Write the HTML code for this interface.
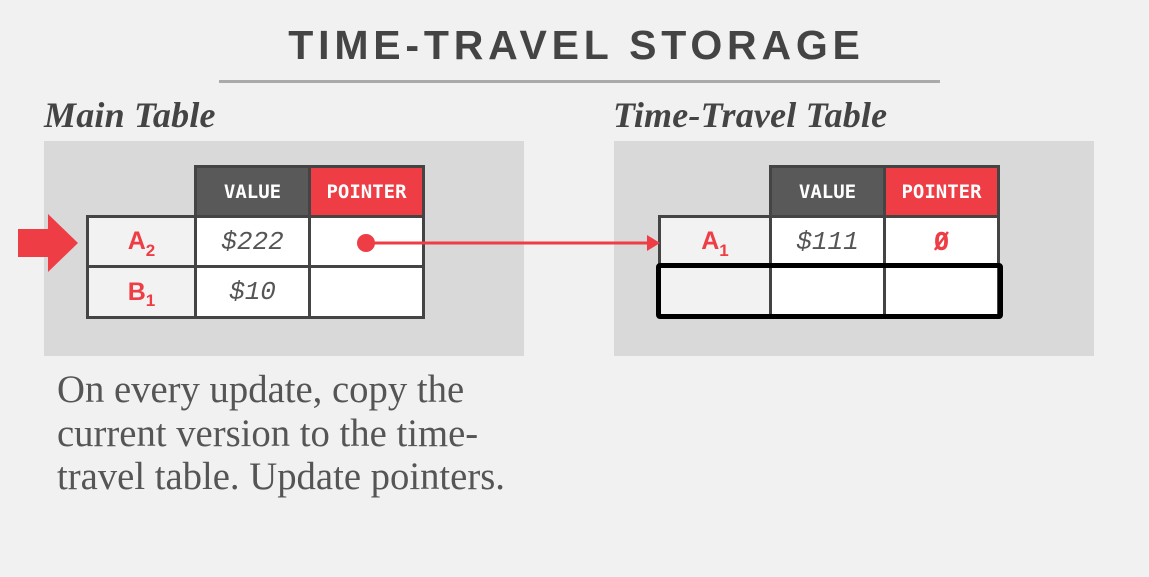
<!DOCTYPE html>
<html><head><meta charset="utf-8"><style>
*{margin:0;padding:0;box-sizing:border-box}
body{width:1149px;height:577px;background:#f1f1f1;position:relative;overflow:hidden;font-family:"Liberation Sans",sans-serif}
.abs{position:absolute}
.title{left:0;width:1149px;top:22px;text-align:center;font-size:41px;font-weight:bold;letter-spacing:4.8px;color:#444;padding-left:4px}
.rule{left:219px;top:80px;width:721px;height:3px;background:#aaa}
.sub{font-family:"Liberation Serif",serif;font-style:italic;font-weight:bold;font-size:36px;color:#444;top:94px;letter-spacing:0.2px}
.box{background:#d9d9d9;top:141px;width:480px;height:215px}
.c{position:absolute;border:3px solid #444;display:flex;align-items:center;justify-content:center;font-family:"Liberation Mono",monospace}
.h{color:#fff;font-weight:bold;font-size:19px;font-family:"DejaVu Sans Mono",monospace}
.dark{background:#595959}.red{background:#ee3d44}
.w{background:#fff}.g{background:#f2f2f2}
.v{font-style:italic;font-size:26px;color:#555}
.k{color:#ee3d44;font-size:25px;font-family:"Liberation Sans",sans-serif;font-weight:bold}
.k span{font-size:17px;position:relative;top:9px;font-weight:bold}
.body{left:57px;top:369px;font-family:"Liberation Serif",serif;font-size:38.7px;line-height:43.5px;color:#555}
</style></head><body>
<div class="abs title">TIME-TRAVEL STORAGE</div>
<div class="abs rule"></div>
<div class="abs sub" style="left:44px">Main Table</div>
<div class="abs sub" style="left:613px">Time-Travel Table</div>
<div class="abs box" style="left:44px"></div>
<div class="abs box" style="left:614px"></div>

<div class="c h dark" style="left:194px;top:165px;width:117px;height:53px">VALUE</div>
<div class="c h red" style="left:308px;top:165px;width:117px;height:53px">POINTER</div>
<div class="c g k" style="left:86px;top:215px;width:111px;height:53px">A<span>2</span></div>
<div class="c w v" style="left:194px;top:215px;width:117px;height:53px">$222</div>
<div class="c w" style="left:308px;top:215px;width:117px;height:53px"></div>
<div class="c g k" style="left:86px;top:265px;width:111px;height:54px">B<span>1</span></div>
<div class="c w v" style="left:194px;top:265px;width:117px;height:54px">$10</div>
<div class="c w" style="left:308px;top:265px;width:117px;height:54px"></div>

<div class="c h dark" style="left:769px;top:165px;width:117px;height:53px">VALUE</div>
<div class="c h red" style="left:883px;top:165px;width:117px;height:53px">POINTER</div>
<div class="c g k" style="left:658px;top:215px;width:114px;height:53px">A<span>1</span></div>
<div class="c w v" style="left:769px;top:215px;width:117px;height:53px">$111</div>
<div class="c w k" style="left:883px;top:215px;width:117px;height:53px;font-family:'DejaVu Sans Mono',monospace">Ø</div>
<div class="c g" style="left:658px;top:265px;width:114px;height:53px"></div>
<div class="c w" style="left:769px;top:265px;width:117px;height:53px"></div>
<div class="c w" style="left:883px;top:265px;width:117px;height:53px"></div>
<div class="abs" style="left:656px;top:263px;width:347px;height:56px;border:5px solid #000;border-radius:4px"></div>

<svg class="abs" style="left:0;top:0" width="1149" height="577">
<polygon points="18,229 48,229 48,214 78,243 48,272 48,257 18,257" fill="#ee3d44"/>
<circle cx="366" cy="243" r="9" fill="#ee3d44"/>
<line x1="366" y1="243" x2="650" y2="243" stroke="#ee3d44" stroke-width="3"/>
<polygon points="647,235 660,243 647,251" fill="#ee3d44"/>
</svg>

<div class="abs body">On every update, copy the<br>current version to the time-<br>travel table. Update pointers.</div>
</body></html>
